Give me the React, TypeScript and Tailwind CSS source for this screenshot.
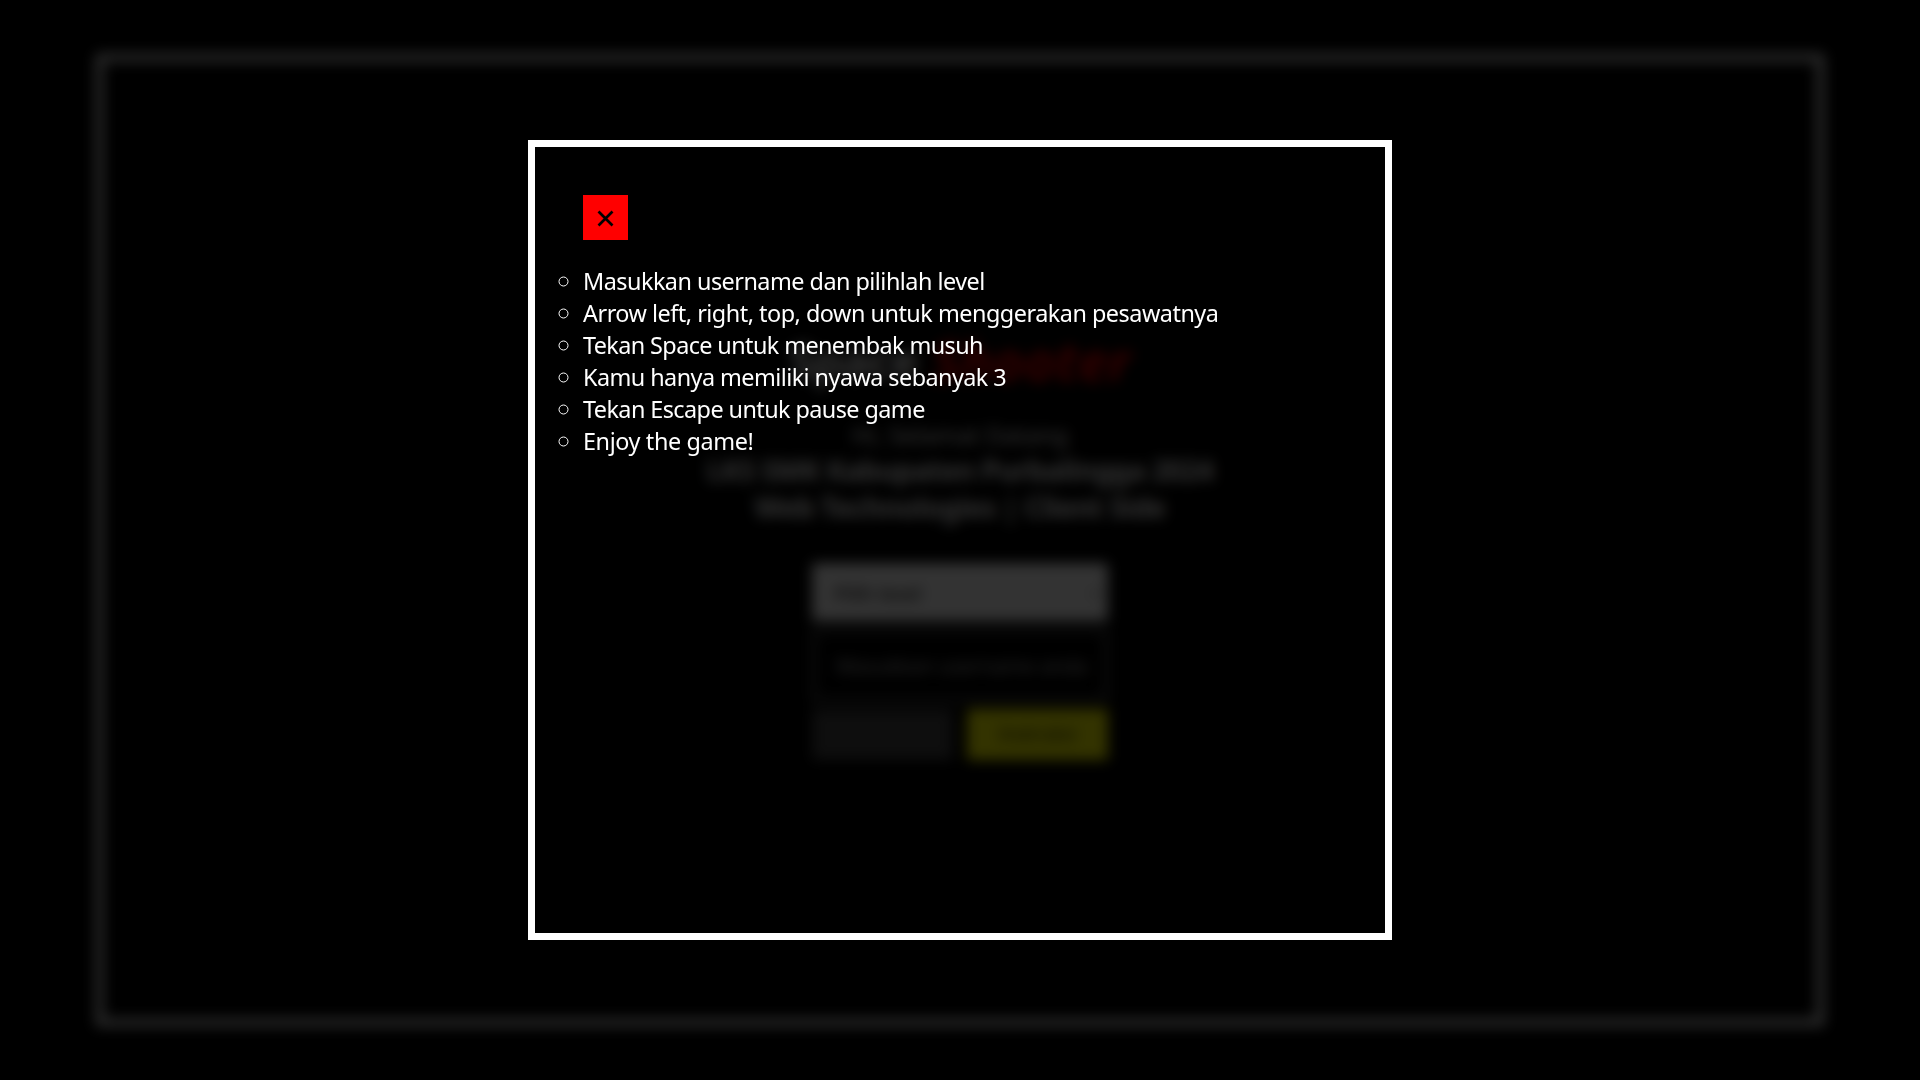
const rules = [
  { text: "Masukkan username dan pilihlah level", style: "tracking-[-0.52px]" },
  { text: "Arrow left, right, top, down untuk menggerakan pesawatnya", style: "tracking-[-0.49px]" },
  { text: "Tekan Space untuk menembak musuh", style: "tracking-[-0.6px]" },
  { text: "Kamu hanya memiliki nyawa sebanyak 3", style: "tracking-[-0.56px]" },
  { text: "Tekan Escape untuk pause game", style: "tracking-[-0.57px]" },
  { text: "Enjoy the game!", style: "tracking-[-0.39px]" },
];

function Welcome() {
  return (
    <main className="flex h-[972px] w-[1728px] flex-col items-center border-[7px] border-white pt-[267px] text-center">
      <h1 className="flex h-16 items-center gap-[14px] text-5xl font-bold">
        <span className="text-[46px] tracking-[-1px]">Space</span>
        <span className="text-[54px] italic text-[#ff0000]">Shooter</span>
      </h1>
      <p className="mt-[27px] text-[24px] leading-8">Hi, Selamat Datang</p>
      <h2 className="mt-[1px] text-[28px] font-bold leading-[37px] tracking-[-0.55px]">
        LKS SMK Kabupaten Purbalingga 2024
        <br />
        Web Technologies | Client Side
      </h2>
      <form className="mt-[37px] flex w-[296px] flex-col gap-2">
        <div className="flex h-[58px] items-center justify-between bg-white pl-[22px] pr-2 pt-1 text-[20px] text-black">
          <span>Pilih level</span>
          <svg className="size-[10px]" viewBox="0 0 12 12" fill="none" stroke="currentColor" strokeWidth="1.5">
            <path d="M1 3l5 5 5-5" />
          </svg>
        </div>
        <div className="flex h-[72px] items-center whitespace-nowrap border-[3px] border-[#767676] px-[21px] pt-[3px] text-[21px] tracking-[-0.45px] text-[#b0b0b0]">
          Masukkan username anda
        </div>
        <div className="grid grid-cols-2 gap-[14px] text-[19px] text-[#1c1c00]">
          <div className="h-[51px] bg-[#464646]" />
          <div className="flex h-[51px] items-center justify-center bg-[#ffff00]">Instruksi</div>
        </div>
      </form>
    </main>
  );
}

export default function App() {
  return (
    <div className="relative flex h-[1080px] w-[1920px] items-center justify-center overflow-hidden bg-black font-['Noto_Sans',sans-serif] text-white">
      <Welcome />
      <div className="absolute inset-0 flex items-center justify-center bg-black/80 backdrop-blur-[7px]">
        <section className="h-[800px] w-[864px] border-[7px] border-white p-12">
          <button className="flex size-[45px] items-center justify-center bg-[#ff0000] text-black" aria-label="Tutup">
            <svg className="mt-[2px] size-[17px]" viewBox="0 0 17 17" fill="none" stroke="currentColor" strokeWidth="2.7">
              <path d="M1.5 1.5l14 14M15.5 1.5l-14 14" />
            </svg>
          </button>
          <ul className="mt-[25px] list-[circle] whitespace-nowrap text-[23.4px] leading-8 marker:text-[24px]">
            {rules.map((rule) => (
              <li key={rule.text} className={`h-8 ${rule.style}`}>{rule.text}</li>
            ))}
          </ul>
        </section>
      </div>
    </div>
  );
}
